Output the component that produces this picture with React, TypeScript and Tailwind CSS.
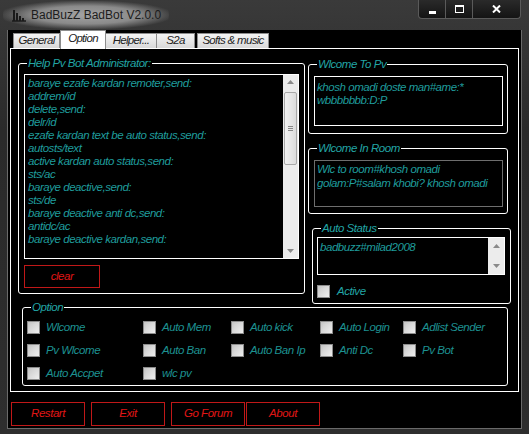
import type { ReactNode } from "react"

const sans = "font-['Liberation_Sans',Arial,sans-serif] italic tracking-[-0.45px]"
const teal = "text-[#22a5a5]"

const helpLines = [
  "baraye ezafe kardan remoter,send:",
  "addrem/id",
  "delete,send:",
  "delr/id",
  "ezafe kardan text be auto status,send:",
  "autosts/text",
  "active kardan auto status,send:",
  "sts/ac",
  "baraye deactive,send:",
  "sts/de",
  "baraye deactive anti dc,send:",
  "antidc/ac",
  "baraye deactive kardan,send:",
]

const options = [
  ["Wlcome", "Auto Mem", "Auto kick", "Auto Login", "Adlist Sender"],
  ["Pv Wlcome", "Auto Ban", "Auto Ban Ip", "Anti Dc", "Pv Bot"],
  ["Auto Accpet", "wlc pv"],
]

function GroupBox({ title, className, children }: { title: string; className: string; children?: ReactNode }) {
  return (
    <div className={`relative rounded-[3px] border border-white ${className}`}>
      <span className={`absolute -top-[8px] left-[8px] bg-black px-[1px] leading-[14px] ${teal}`}>{title}</span>
      {children}
    </div>
  )
}

function Arrow({ up }: { up?: boolean }) {
  return (
    <svg width="7" height="4" viewBox="0 0 7 4" className="block">
      <path d={up ? "M0 4 L3.5 0 L7 4 Z" : "M0 0 L3.5 4 L7 0 Z"} fill="#8a8a8a" />
    </svg>
  )
}

function CheckBox() {
  return (
    <span className="block h-[13px] w-[13px] shrink-0 border border-[#8c8c8c] bg-[linear-gradient(135deg,#c4c4c4,#efefef)] p-[2px]">
      <span className="block h-full w-full bg-[linear-gradient(135deg,#cfcfcf,#e8e8e8)]" />
    </span>
  )
}

function RedButton({ label, className }: { label: string; className: string }) {
  return (
    <button className={`h-[24px] w-[74px] border border-[#c01818] bg-black text-[11.5px] text-[#e01616] ${sans} ${className}`}>
      {label}
    </button>
  )
}

function Tab({ label, className }: { label: string; className: string }) {
  return (
    <div
      className={`flex h-[15px] items-center justify-center border border-b-0 border-[#8c8c8c] bg-[linear-gradient(180deg,#f4f4f4,#d9d9d9)] ${className}`}
    >
      {label}
    </div>
  )
}

export default function App() {
  return (
    <div className="flex h-[434px] w-[529px] flex-col bg-[linear-gradient(180deg,#3a3a3a,#2a2a2a_30%,#2e2e2e)]">
      {/* title bar */}
      <div className="flex h-[30px] items-start">
        <div className="ml-[3px] mt-[1px] flex h-[28px] items-center rounded-full bg-[radial-gradient(ellipse_at_center,#a3a3a3_0%,#8a8a8a_45%,rgba(120,120,120,0)_75%)] px-[8px]">
          <svg width="16" height="14" viewBox="0 0 16 14" className="mr-[4px]">
            <path d="M1 13 H15" stroke="#1a1a1a" strokeWidth="1.5" />
            <rect x="2" y="2" width="2" height="11" fill="#1a1a1a" />
            <rect x="5" y="5" width="2" height="8" fill="#1a1a1a" />
            <rect x="8" y="8" width="2" height="5" fill="#1a1a1a" />
            <rect x="11" y="10" width="2" height="3" fill="#1a1a1a" />
          </svg>
          <span className="font-['Liberation_Sans',Arial,sans-serif] text-[12px] text-[#1c1c1c]">
            BadBuzZ BadBot V2.0.0
          </span>
        </div>
        <div className="ml-auto mr-[8px] flex h-[19px] overflow-hidden rounded-b-[4px] border border-t-0 border-[#5a5a5a] bg-[linear-gradient(180deg,#2a2a2a,#141414)]">
          <div className="flex w-[27px] items-end justify-center border-r border-[#5a5a5a] pb-[4px]">
            <span className="block h-[3px] w-[7px] bg-white" />
          </div>
          <div className="flex w-[27px] items-center justify-center border-r border-[#5a5a5a]">
            <span className="block h-[8px] w-[9px] border-[1.5px] border-t-[2px] border-white" />
          </div>
          <div className="flex w-[47px] items-center justify-center">
            <svg width="9" height="8" viewBox="0 0 9 8">
              <path d="M1 0.5 L8 7.5 M8 0.5 L1 7.5" stroke="white" strokeWidth="2" />
            </svg>
          </div>
        </div>
      </div>

      {/* client area */}
      <div className="ml-[7px] flex h-[399px] w-[515px] flex-col border border-t-0 border-[#6a6a6a] bg-black">
        {/* tabs */}
        <div className="flex h-[18px] items-end pl-[5px] font-['Liberation_Sans',Arial,sans-serif] text-[11.5px] italic tracking-[-0.7px] text-[#222]">
          <Tab label="General" className="w-[47px]" />
          <div className="relative z-10 -mb-[1px] flex h-[19px] w-[46px] items-center justify-center border border-b-0 border-[#8c8c8c] bg-white pb-[2px]">
            Option
          </div>
          <Tab label="Helper..." className="w-[51px] border-l-0" />
          <Tab label="S2a" className="w-[38px] border-l-0" />
          <Tab label="Softs & music" className="ml-[2px] w-[72px]" />
        </div>

        {/* tab page */}
        <div className={`ml-[2px] h-[344px] w-[509px] border border-white bg-black text-[11.5px] ${sans}`}>
          <div className="flex items-start">
            <GroupBox title="Help Pv Bot Administrator:" className="ml-[7px] mt-[14px] h-[231px] w-[287px]">
              <div className="ml-[5px] mt-[10px] flex h-[185px] w-[275px] border border-white">
                <div className="flex-1 overflow-hidden pl-[3px] pt-[1.5px] leading-[13px] text-[#1f9c9c]">
                  {helpLines.map((l) => (
                    <div key={l}>{l}</div>
                  ))}
                </div>
                <div className="flex w-[15px] flex-col items-center bg-[#ececec] py-[5px]">
                  <Arrow up />
                  <div className="mt-[8px] flex h-[73px] w-[13px] items-center justify-center rounded-[2px] border border-[#a8a8a8] bg-[linear-gradient(90deg,#f2f2f2,#dcdcdc)]">
                    <div className="flex flex-col gap-[1px]">
                      <span className="block h-px w-[5px] bg-[#888]" />
                      <span className="block h-px w-[5px] bg-[#888]" />
                      <span className="block h-px w-[5px] bg-[#888]" />
                    </div>
                  </div>
                  <div className="mt-auto">
                    <Arrow />
                  </div>
                </div>
              </div>
              <button className="ml-[5px] mt-[6px] h-[23px] w-[76px] border border-[#c01818] text-[#e01616]">
                clear
              </button>
            </GroupBox>

            <div className="ml-[3px] mt-[14px] flex flex-col">
              <GroupBox title="Wlcome To Pv" className="mt-[1px] h-[70px] w-[200px]">
                <div className="ml-[5px] mt-[11px] h-[50px] w-[189px] border border-white pl-[2px] pt-[4px] leading-[13px] text-[#1f9c9c]">
                  <div>khosh omadi doste man#ame:*</div>
                  <div>wbbbbbbb:D:P</div>
                </div>
              </GroupBox>
              <GroupBox title="Wlcome In Room" className="mt-[14px] h-[66px] w-[200px]">
                <div className="ml-[5px] mt-[11px] h-[47px] w-[189px] border border-[#6e6e6e] pl-[2px] pt-[1px] leading-[14px] text-[#1f9c9c]">
                  <div>Wlc to room#khosh omadi</div>
                  <div>golam:P#salam khobi? khosh omadi</div>
                </div>
              </GroupBox>
              <GroupBox title="Auto Status" className="ml-[4px] mt-[14px] h-[76px] w-[199px]">
                <div className="ml-[4px] mt-[8px] flex h-[38px] w-[188px] border border-white">
                  <div className="flex-1 pl-[2px] pt-[2.5px] leading-[13px] text-[#1f9c9c]">badbuzz#milad2008</div>
                  <div className="flex w-[16px] flex-col items-center justify-between bg-[#ececec] py-[6px]">
                    <Arrow up />
                    <Arrow />
                  </div>
                </div>
                <div className="ml-[4px] mt-[8px] flex items-center gap-[7px]">
                  <CheckBox />
                  <span className={teal}>Active</span>
                </div>
              </GroupBox>
            </div>
          </div>

          <GroupBox title="Option" className="ml-[11px] mt-[3px] h-[79px] w-[486px]">
            <div className="mt-[13px] grid grid-cols-[116px_88px_89px_83px_1fr] gap-y-[10px] pl-[4px]">
              {options.flatMap((row, r) =>
                row.map((label) => (
                  <div key={`${r}-${label}`} className="flex h-[13px] items-center gap-[6px]">
                    <CheckBox />
                    <span className="text-[#1d9191]">{label}</span>
                  </div>
                )),
              )}
            </div>
          </GroupBox>
        </div>

        {/* bottom buttons */}
        <div className="mt-[10px] flex pl-[3px]">
          <RedButton label="Restart" className="" />
          <RedButton label="Exit" className="ml-[6px]" />
          <RedButton label="Go Forum" className="ml-[6px]" />
          <RedButton label="About" className="ml-[1px]" />
        </div>
      </div>
    </div>
  )
}
